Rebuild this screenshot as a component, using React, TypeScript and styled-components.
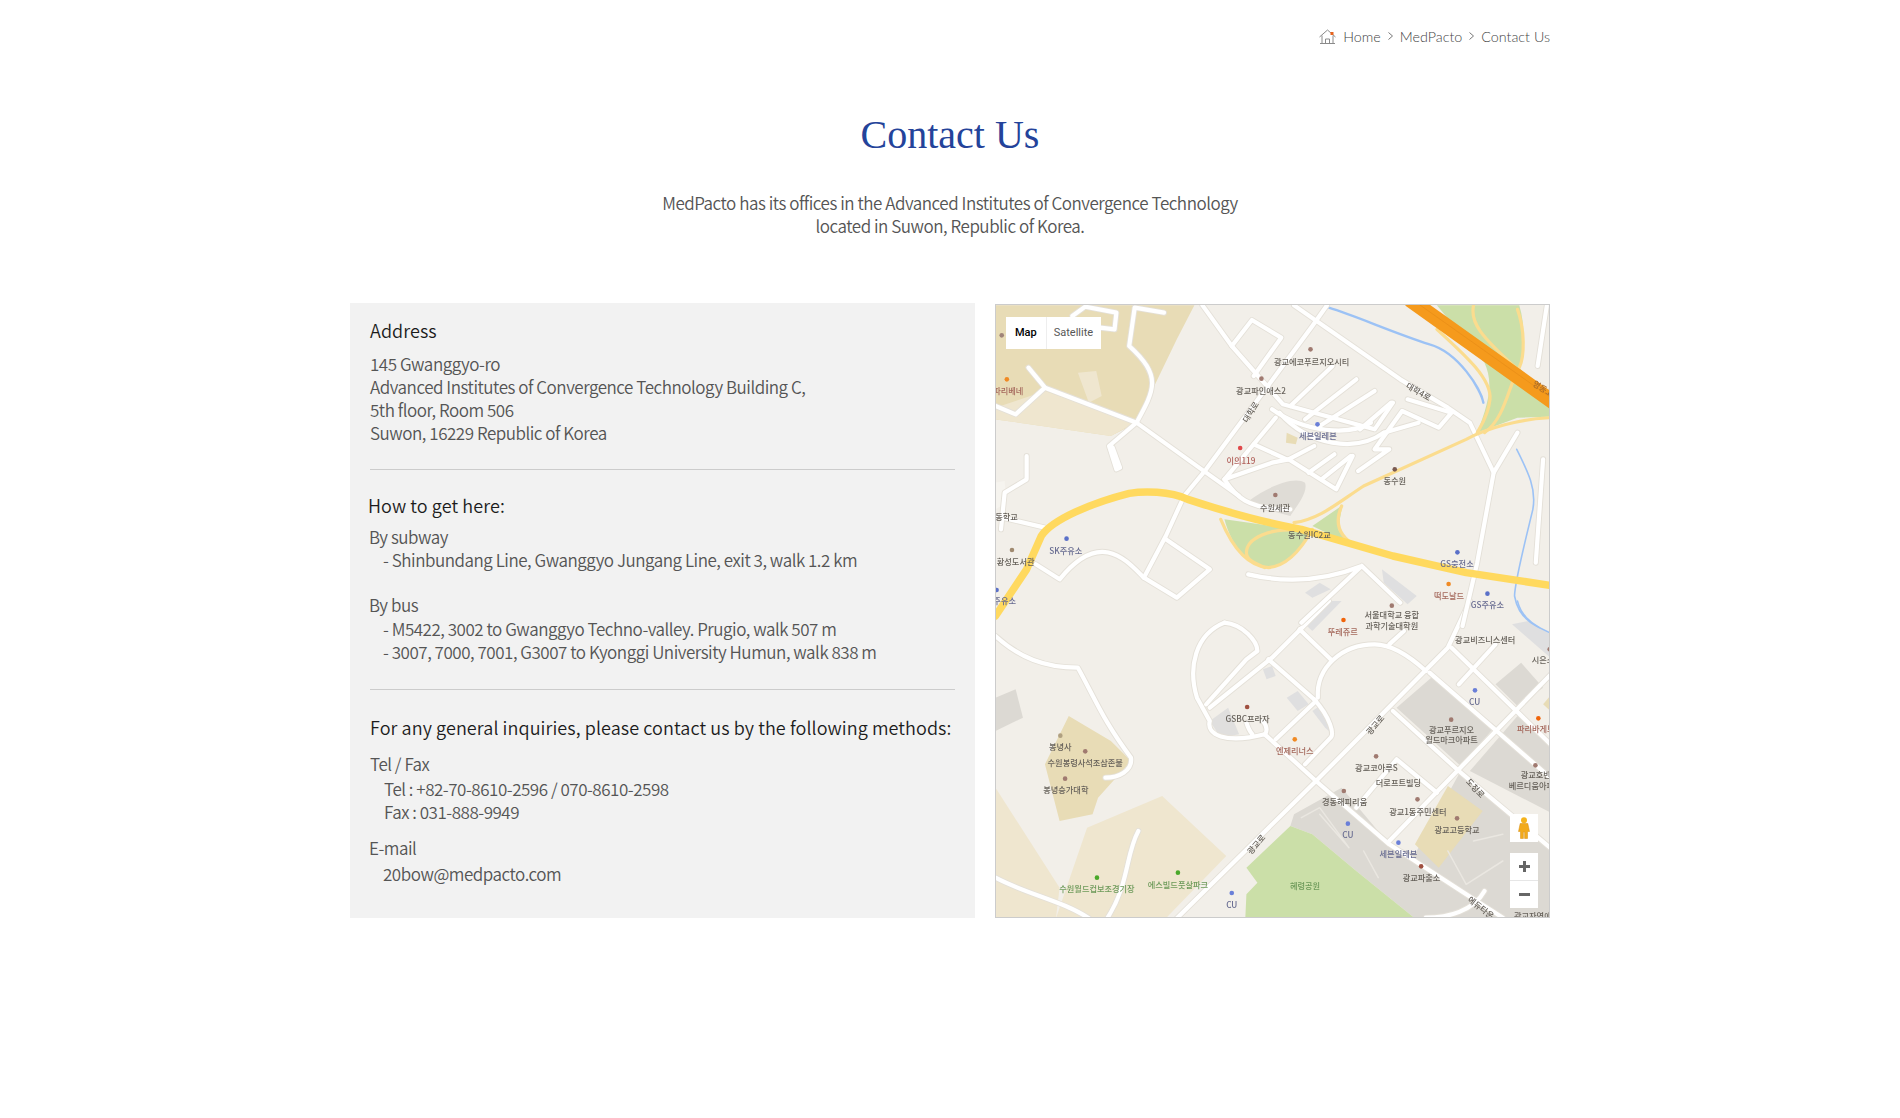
import React from "react";
import styled, { createGlobalStyle } from "styled-components";

const Global = createGlobalStyle`
  html, body { margin: 0; padding: 0; background: #fff; }
  body { font-family: "Noto Sans CJK KR", "Noto Sans", sans-serif; font-weight: 350; color: #555; }
`;

const Page = styled.div`
  width: 1200px;
  height: 1118px;
  margin: 0 auto;
`;
const Breadcrumb = styled.nav`
  display: flex;
  justify-content: flex-end;
  align-items: center;
  height: 20px;
  padding-top: 26px;
  font-family: "Lato", sans-serif;
  font-weight: 300;
  font-size: 14.3px;
  color: #444;
`;
const Crumb = styled.span`
  margin-left: 7px;
`;
const Sep = styled.svg`
  width: 5px;
  height: 8px;
  margin: 0 7px 0 7px;
  fill: none;
  stroke: #777;
`;
const Title = styled.h1`
  margin: 64px 0 0;
  text-align: center;
  font-family: "Liberation Serif", serif;
  font-weight: 400;
  font-size: 40px;
  line-height: 50px;
  color: #24439a;
`;
const Intro = styled.p`
  margin: 31px 0 0;
  text-align: center;
  font-size: 17px;
  font-weight: 350;
  letter-spacing: -0.47px;
  line-height: 23px;
  color: #555;
`;
const Columns = styled.div`
  display: flex;
  justify-content: space-between;
  margin-top: 66px;
  height: 615px;
`;
const InfoPanel = styled.section`
  width: 625px;
  box-sizing: border-box;
  background: #f2f2f2;
  padding: 14px 20px 0;
`;
const Heading = styled.h2<{ $x?: number; $top?: number }>`
  margin: ${(p) => p.$top ?? 0}px 0 0 ${(p) => p.$x ?? 0}px;
  font-size: 18px;
  letter-spacing: 0.085px;
  line-height: 27px;
  font-weight: 350;
  color: #1c1c1c;
`;
const Line = styled.div<{ $x?: number; $top?: number }>`
  margin: ${(p) => p.$top ?? 0}px 0 0 ${(p) => p.$x ?? 0}px;
  font-size: 17px;
  font-weight: 350;
  letter-spacing: -0.47px;
  line-height: 23px;
  color: #555;
  white-space: nowrap;
`;
const Rule = styled.hr<{ $top: number }>`
  margin: ${(p) => p.$top}px 0 0;
  border: 0;
  height: 1px;
  background: #ccc;
`;
const MapFrame = styled.div`
  position: relative;
  width: 555px;
  height: 614px;
  margin-top: 1px;
  box-sizing: border-box;
  border: 1px solid #ccc;
  background: #f2efe9;
  overflow: hidden;
`;
const MapCanvas = styled.svg`
  display: block;
  width: 553px;
  height: 612px;
  filter: blur(0.5px);
`;
const MapText = styled.text<{ $c: string }>`
  font-family: "Noto Sans CJK KR", sans-serif;
  font-size: 8.2px;
  font-weight: 500;
  text-anchor: middle;
  fill: ${(p) => p.$c};
`;
const MapType = styled.div`
  position: absolute;
  left: 10px;
  top: 12px;
  display: flex;
  height: 32px;
  background: #fff;
  font-family: "Roboto", sans-serif;
  font-size: 11px;
  line-height: 32px;
`;
const MapTypeBtn = styled.div<{ $on?: boolean }>`
  padding: 0 ${(p) => (p.$on ? 9 : 8)}px 0 ${(p) => (p.$on ? 9 : 7)}px;
  color: ${(p) => (p.$on ? "#000" : "#565656")};
  font-weight: ${(p) => (p.$on ? 500 : 400)};
  border-right: ${(p) => (p.$on ? "1px solid #eee" : "0")};
`;
const Pegman = styled.div`
  position: absolute;
  left: 514px;
  top: 509px;
  width: 28px;
  height: 28px;
  background: #fff;
  display: flex;
  align-items: center;
  justify-content: center;
`;
const ZoomBox = styled.div`
  position: absolute;
  left: 514px;
  top: 548px;
  width: 28px;
  height: 55px;
  background: #fff;
  display: flex;
  flex-direction: column;
`;
const ZoomBtn = styled.div`
  flex: 1;
  display: flex;
  align-items: center;
  justify-content: center;
  & + & { border-top: 1px solid #e6e6e6; }
`;

const C = { base: "#f2efe9", tan: "#e8dcb6", lt: "#efe6cf", green: "#cbdfa8", grey: "#dcd9d3", y: "#ffd95f", ry: "#fbdc8e", o: "#f59a1c", blue: "#9cc2f5" };

type Shape = [string, string];
const areas1: Shape[] = [
  ["M15,28 L558,28 L510,130 L400,380 L330,420 L15,370 Z", C.tan],
  ["M150,285 L395,380 L330,420 L15,370 L15,335 Z", C.lt],
  ["M240,230 L290,225 L305,300 L270,320 Z", C.lt],
  ["M1220,28 L1445,28 C1465,100 1455,180 1445,215 L1540,330 L1540,362 L1440,365 L1330,410 C1370,300 1370,250 1350,200 Z", C.green],
  ["M640,670 C660,750 700,810 760,815 C820,810 850,760 870,705 Z", C.green],
  ["M880,690 L962,628 L950,700 L985,745 Z", C.green],
  ["M700,620 C760,570 830,540 860,560 C870,590 830,640 820,660 L720,630 Z", "#dfdcd6"],
  ["M810,410 L840,425 L835,445 L808,440 Z", C.tan],
  ["M1070,820 L1165,900 L1140,925 L1075,860 Z", "#dfdfe0"],
  ["M860,890 L900,860 L930,880 L880,905 Z", "#dfdfe0"],
  ["M15,560 L40,555 L45,620 L15,640 Z", "#f6f4ef"],
];
const water1 = [
  "M925,35 C1000,60 1100,110 1200,145 C1280,170 1340,280 1347,320",
  "M1438,460 C1470,530 1492,580 1482,640 C1460,740 1432,860 1432,900 C1440,950 1470,980 1500,995",
];
const roads1 = [
  "M920,28 L880,90 L590,520 L530,600 L480,720 L420,845 L510,905 L600,820 L480,730",
  "M420,845 C370,790 300,700 190,850 L125,805",
  "M830,28 L1120,250 L1250,335 L1310,380 L1375,530 L1330,800 L1290,990",
  "M1440,410 L1375,530",
  "M580,28 L660,150 L800,325 L1050,400 L1100,320",
  "M660,150 L715,72 L795,125 L720,240",
  "M935,210 L820,330 M1000,250 L860,370 M1050,285 L900,390 M1095,320 L1010,400",
  "M770,340 C860,410 980,420 1040,380",
  "M790,350 C870,450 1000,470 1075,410",
  "M1140,310 L1260,350 L1225,395 L1125,345 L1050,460 L1090,460 L1005,525",
  "M1075,410 L1170,380",
  "M780,365 L640,550 L770,500 L815,490 L945,580 L990,480",
  "M720,445 L810,490 M885,450 L815,490 M940,475 L870,530 M985,480 L905,550",
  "M640,550 C670,600 700,640 820,640",
  "M400,380 L590,530 L680,600",
  "M400,380 L150,275 L70,355 L15,330",
  "M150,275 L105,215",
  "M400,380 C450,280 470,240 380,150 L395,35 L475,50",
  "M400,380 L325,450 L345,520 L355,515 L335,455",
  "M15,660 L150,695",
  "M100,480 L100,550 L40,590 L30,700",
  "M260,32 L345,50 L340,100 L300,95 M260,32 L225,60",
  "M1510,490 L1490,800",
  "M1520,30 L1495,210",
  "M1015,810 L850,980 M1015,810 L1120,920 M705,835 C800,860 900,860 1015,810",
];
const ramps1 = [
  "M1540,365 C1450,365 1350,400 1300,430 L1020,570 C950,620 900,670 830,680",
  "M630,670 C660,750 700,810 760,815 C820,810 860,740 880,700",
  "M860,705 C760,690 700,730 700,770 C700,790 720,800 750,815",
  "M960,630 C940,680 950,720 1000,750 L1100,780",
  "M1220,100 C1300,180 1370,250 1365,310 C1360,360 1340,390 1330,410",
  "M1320,28 C1310,80 1340,120 1440,220 C1410,300 1400,370 1350,410",
  "M1440,40 C1460,100 1460,180 1445,215",
];
const areas2: Shape[] = [
  ["M15,560 L190,860 L180,952 L15,952 Z", C.lt],
  ["M470,585 L645,765 L480,952 L180,952 L265,680 Z", C.lt],
  ["M215,345 L330,420 L385,480 L295,590 L280,640 L190,660 L150,490 Z", C.tan],
  ["M15,290 L70,265 L90,350 L15,390 Z", "#dcd9d3"],
  ["M820,675 L830,640 L960,560 L1090,730 L1160,760 L1280,520 L1540,740 L1540,952 L1160,952 L1000,810 L880,700 Z", C.grey],
  ["M1160,730 L1250,555 L1345,630 L1225,800 Z", C.tan],
  ["M1110,320 L1210,225 L1380,375 L1285,495 Z", C.grey],
  ["M1310,510 L1440,345 L1540,440 L1540,640 Z", C.grey],
  ["M1380,250 L1450,185 L1510,260 L1440,315 Z", C.grey],
  ["M1510,310 L1540,270 L1540,340 Z", C.tan],
  ["M820,675 L700,800 L730,845 L700,880 L697,952 L1160,952 L1000,810 L880,700 Z", C.green],
  ["M860,70 L920,0 L960,0 L880,90 Z", "#dfdfe0"],
  ["M810,290 L840,270 L870,310 L840,330 Z", "#dfdfe0"],
  ["M880,330 L900,315 L935,400 L915,380 Z", "#dfdfe0"],
  ["M600,360 L650,320 L680,400 L630,410 Z", "#e0dfde"],
  ["M745,205 L770,195 L780,225 L755,235 Z", "#dfdfe0"],
  ["M1425,70 L1470,60 L1530,100 L1540,180 Z", "#dfdfe0"],
];
const water2 = ["M1440,0 C1450,50 1490,80 1540,100"];
const roads2 = [
  "M15,105 C80,170 150,200 240,200 C290,300 310,360 385,470 C390,510 350,530 315,530",
  "M510,952 L890,540 L1250,140 L1310,0",
  "M925,0 L770,170 L600,320",
  "M845,85 L930,175",
  "M895,290 C890,200 960,130 1050,130 C1100,130 1150,170 1190,210",
  "M1090,130 L1130,90",
  "M760,175 L890,300 L780,415",
  "M1100,330 L1280,510 L1540,750",
  "M1200,215 L1540,540",
  "M1260,140 L1540,440",
  "M1540,210 L1090,720",
  "M890,540 L1090,730 L1300,880 L1400,950",
  "M1380,130 L1280,250",
  "M15,830 C100,880 200,900 270,952",
  "M405,690 C370,760 380,850 320,952",
  "M640,65 C560,100 540,200 565,290 L600,360 C590,400 640,430 750,400 L890,540",
  "M640,65 C690,70 730,120 730,150 L700,175 L590,310",
  "M885,295 C930,350 940,400 930,410 L860,490",
  "M700,365 C710,400 720,400 715,400 M745,360 C760,380 755,395 750,400",
  "M1000,620 L1110,475 L1220,575",
  "M1190,950 C1250,950 1320,930 1350,870",
];
const thin2 = [
  "M850,650 L900,620 L980,740 L900,640 M1020,750 L1060,830 M1250,750 L1300,850 L1400,780 M1320,720 L1400,700",
];

type Label = [string, number, number, string, number?];
const ink = "#66615a";
const red = "#a5685c";
const blueInk = "#666a90";
const labels: Label[] = [
  ["광교에코푸르지오시티", 878, 197, ink],
  ["광교파인애스2", 740, 286, ink],
  ["대학로", 712, 348, ink, -58],
  ["대학4로", 1170, 287, ink, 30],
  ["영동고", 1510, 278, "#a86a2a", 32],
  ["세븐일레븐", 895, 419, blueInk],
  ["이의119", 685, 494, "#b0605a"],
  ["동수원", 1105, 555, ink],
  ["수원세관", 778, 635, ink],
  ["동수원IC2교", 872, 716, ink],
  ["SK주유소", 207, 765, blueInk],
  ["황성도서관", 70, 797, ink],
  ["동학교", 45, 664, ink],
  ["파리베네", 50, 286, red],
  ["GS충전소", 1275, 804, blueInk],
  ["GS주유소", 1358, 927, blueInk],
  ["떡도날드", 1253, 901, red],
  ["주유소", 40, 914, blueInk],
  ["서울대학교 융합", 1097, 958, ink],
  ["과학기술대학원", 1097, 990, ink],
  ["뚜레쥬르", 963, 93 + 915, red],
  ["광교비즈니스센터", 1352, 117 + 915, ink],
  ["시은소", 1510, 178 + 915, ink],
  ["CU", 1323, 302 + 915, blueInk],
  ["GSBC프라자", 703, 354 + 915, ink],
  ["광교로", 1052, 372 + 915, ink, -50],
  ["광교푸르지오", 1260, 386 + 915, ink],
  ["월드마크아파트", 1260, 418 + 915, ink],
  ["파리바게트", 1490, 385 + 915, red],
  ["봉녕사", 192, 438 + 915, ink],
  ["수원봉령사석조삼존불", 260, 487 + 915, ink],
  ["봉녕승가대학", 207, 568 + 915, ink],
  ["엔제리너스", 832, 450 + 915, red],
  ["광교코아루S", 1055, 502 + 915, ink],
  ["더로프트빌딩", 1115, 547 + 915, ink],
  ["광교호반", 1490, 522 + 915, ink],
  ["베르디움아파", 1478, 554 + 915, ink],
  ["도청로", 1325, 562 + 915, ink, 47],
  ["경동해피리움", 968, 604 + 915, ink],
  ["광교1동주민센터", 1168, 632 + 915, ink],
  ["광교고등학교", 1275, 687 + 915, ink],
  ["CU", 977, 703 + 915, blueInk],
  ["광교로", 727, 730 + 915, ink, -50],
  ["세븐일레븐", 1115, 758 + 915, blueInk],
  ["광교파출소", 1178, 832 + 915, ink],
  ["에스빌드풋살파크", 513, 851 + 915, "#6d9a5a"],
  ["수원월드컵보조경기장", 292, 865 + 915, "#6d9a5a"],
  ["혜령공원", 860, 855 + 915, "#6d9a5a"],
  ["CU", 660, 912 + 915, blueInk],
  ["에듀타운", 1340, 920 + 915, ink, 38],
  ["광교자연애", 1482, 945 + 915, ink],
];
const dots: [number, number, string][] = [
  [32, 118, "#a08478"], [46, 250, "#f08a24"], [875, 160, "#a07a70"], [741, 248, "#a07a70"], [894, 385, "#6a7fd8"],
  [683, 456, "#e0484a"], [1105, 520, "#7a5a50"], [779, 597, "#a07a70"], [209, 728, "#5a70c8"], [60, 762, "#a08a70"],
  [1276, 769, "#5a70c8"], [1358, 893, "#5a70c8"], [1252, 864, "#f08a24"], [1097, 929, "#a07a70"], [965, 972, "#f0640a"],
  [18, 882, "#5a70c8"], [1528, 145 + 915, "#a07a70"], [1324, 268 + 915, "#6a7fd8"], [702, 318 + 915, "#a05040"],
  [1259, 356 + 915, "#a07a70"], [1497, 352 + 915, "#f0640a"], [192, 404 + 915, "#b0a080"], [260, 451 + 915, "#a07a70"],
  [205, 533 + 915, "#a07a70"], [832, 415 + 915, "#f08a24"], [1054, 466 + 915, "#a07a70"], [1489, 493 + 915, "#a07a70"],
  [966, 570 + 915, "#a07a70"], [1167, 595 + 915, "#a07a70"], [1275, 652 + 915, "#a07a70"], [977, 668 + 915, "#6a7fd8"],
  [1115, 725 + 915, "#6a7fd8"], [1177, 796 + 915, "#a05040"], [513, 815 + 915, "#4aa82a"], [292, 830 + 915, "#4aa82a"],
  [660, 876 + 915, "#6a7fd8"],
];

const sx = 0.3663;
const sy = 1 / 3;
const lx = (x: number) => x * sx - 6;
const ly = (y: number) => y * sy - 9;

const P = ({ d, c, w, f }: { d: string; c?: string; w?: number; f?: string }) => (
  <path d={d} stroke={c ?? "none"} strokeWidth={w ?? 0} fill={f ?? "none"} vectorEffect="non-scaling-stroke" strokeLinejoin="round" strokeLinecap="round" />
);

const MapDrawing = () => (
  <MapCanvas viewBox="0 0 553 612">
    <g transform={`translate(-6,-9) scale(${sx},${sy})`}>
      {areas1.map(([d, f], i) => <P key={i} d={d} f={f} />)}
      <g transform="translate(0,915)">
        {areas2.map(([d, f], i) => <P key={i} d={d} f={f} />)}
        {water2.map((d, i) => <P key={i} d={d} c={C.blue} w={1.5} />)}
        {thin2.map((d, i) => <P key={i} d={d} c="#eae7e1" w={1.5} />)}
        {roads2.map((d, i) => <P key={i} d={d} c="#e4e0d8" w={6} />)}
        {roads2.map((d, i) => <P key={i} d={d} c="#fff" w={4.2} />)}
      </g>
      {water1.map((d, i) => <P key={i} d={d} c={C.blue} w={i === 0 ? 2.4 : 1.6} />)}
      {roads1.map((d, i) => <P key={i} d={d} c="#e4e0d8" w={6} />)}
      {roads1.map((d, i) => <P key={i} d={d} c="#fff" w={4.2} />)}
      {ramps1.map((d, i) => <P key={i} d={d} c={C.ry} w={3.2} />)}
      <P d="M15,960 L100,820 L140,720 C170,670 280,620 380,592 C420,585 490,585 540,610 C650,650 750,680 850,700 L1100,780 L1300,830 L1540,870" c={C.y} w={7.5} />
      <P d="M1150,14 L1555,332" c={C.o} w={15} />
      <P d="M1170,24 L1540,312" c="#e88e18" w={0.8} />
    </g>
    {dots.map(([x, y, c], i) => <circle key={i} cx={lx(x)} cy={ly(y)} r={2.3} fill={c} />)}
    {labels.map(([t, x, y, c, r], i) => (
      <MapText key={i} $c={c} x={lx(x)} y={ly(y) + 3} transform={r ? `rotate(${r} ${lx(x)} ${ly(y)})` : undefined}>{t}</MapText>
    ))}
  </MapCanvas>
);

const HomeIcon = () => (
  <svg width="17" height="15" viewBox="0 0 17 15">
    <path d="M0.5,8 L8.5,1 L16.5,8 M3,6.5 V14.5 H14 V6.5 M6.5,14.5 V10 H10.5 V14.5 M1,14.5 H16" fill="none" stroke="#8a8a8a" />
    <rect x="11.5" y="3" width="3" height="3" fill="#e8641e" />
  </svg>
);
const Chevron = () => (
  <Sep viewBox="0 0 5 8"><path d="M0.5,0.5 L4.5,4 L0.5,7.5" /></Sep>
);

export default function App() {
  return (
    <Page>
      <Global />
      <Breadcrumb>
        <HomeIcon />
        <Crumb>Home</Crumb>
        <Chevron />
        <span>MedPacto</span>
        <Chevron />
        <span>Contact Us</span>
      </Breadcrumb>
      <Title>Contact Us</Title>
      <Intro>
        MedPacto has its offices in the Advanced Institutes of Convergence Technology
        <br />
        located in Suwon, Republic of Korea.
      </Intro>
      <Columns>
        <InfoPanel>
          <Heading>Address</Heading>
          <Line $top={8}>145 Gwanggyo-ro</Line>
          <Line>Advanced Institutes of Convergence Technology Building C,</Line>
          <Line>5th floor, Room 506</Line>
          <Line>Suwon, 16229 Republic of Korea</Line>
          <Rule $top={25} />
          <Heading $x={-2} $top={22}>How to get here:</Heading>
          <Line $x={-1} $top={6}>By subway</Line>
          <Line $x={13}>- Shinbundang Line, Gwanggyo Jungang Line, exit 3, walk 1.2 km</Line>
          <Line $x={-1} $top={22}>By bus</Line>
          <Line $x={13} $top={1}>- M5422, 3002 to Gwanggyo Techno-valley. Prugio, walk 507 m</Line>
          <Line $x={13}>- 3007, 7000, 7001, G3007 to Kyonggi University Humun, walk 838 m</Line>
          <Rule $top={26} />
          <Heading $top={24}>For any general inquiries, please contact us by the following methods:</Heading>
          <Line $top={11}>Tel / Fax</Line>
          <Line $x={14} $top={2}>Tel : +82-70-8610-2596 / 070-8610-2598</Line>
          <Line $x={14}>Fax : 031-888-9949</Line>
          <Line $x={-1} $top={13}>E-mail</Line>
          <Line $x={13} $top={3}>20bow@medpacto.com</Line>
        </InfoPanel>
        <MapFrame>
          <MapDrawing />
          <MapType>
            <MapTypeBtn $on>Map</MapTypeBtn>
            <MapTypeBtn>Satellite</MapTypeBtn>
          </MapType>
          <Pegman>
            <svg width="12" height="22" viewBox="0 0 12 22">
              <circle cx="6" cy="3.2" r="3" fill="#f5b31c" />
              <path d="M2.2,6.5 H9.8 L11.5,14.5 H9.5 V21.5 H6.6 V15 H5.4 V21.5 H2.5 V14.5 H0.5 Z" fill="#f2aa1a" stroke="#d68c10" strokeWidth="0.5" />
            </svg>
          </Pegman>
          <ZoomBox>
            <ZoomBtn>
              <svg width="11" height="11" viewBox="0 0 11 11"><path d="M4,0 H7 V4 H11 V7 H7 V11 H4 V7 H0 V4 H4 Z" fill="#666" /></svg>
            </ZoomBtn>
            <ZoomBtn>
              <svg width="11" height="3" viewBox="0 0 11 3"><rect width="11" height="3" fill="#666" /></svg>
            </ZoomBtn>
          </ZoomBox>
        </MapFrame>
      </Columns>
    </Page>
  );
}
